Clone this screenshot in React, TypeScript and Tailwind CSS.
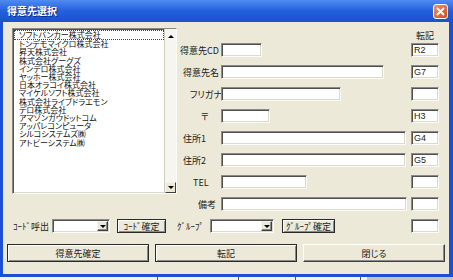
const customers = [
  "ソフトバンカー株式会社",
  "トンデモマイクロ株式会社",
  "昇天株式会社",
  "株式会社グーグズ",
  "インデロ株式会社",
  "ヤッホー株式会社",
  "日本オラコイ株式会社",
  "マイケルソフト株式会社",
  "株式会社ライブドラエモン",
  "デロ株式会社",
  "アマゾンガウドットコム",
  "アッパレコンピュータ",
  "シルコシステムズ㈱",
  "アトビーシステム㈱",
];

type Row = { label: string; pad: string; width: string; code: string };

const rows: Row[] = [
  { label: "得意先CD", pad: "pl-[3px]", width: "w-[41px]", code: "R2" },
  { label: "得意先名", pad: "pl-[6px]", width: "w-[163px]", code: "G7" },
  { label: "フリガナ", pad: "pl-[13px]", width: "w-[120px]", code: "" },
  { label: "〒", pad: "pl-[24px]", width: "w-[49px]", code: "H3" },
  { label: "住所1", pad: "pl-[6px]", width: "w-[185px]", code: "G4" },
  { label: "住所2", pad: "pl-[6px]", width: "w-[185px]", code: "G5" },
  { label: "TEL", pad: "pl-[16px]", width: "w-[86px]", code: "" },
  { label: "備考", pad: "pl-[21px]", width: "w-[186px]", code: "" },
];

const sunken =
  "bg-white border border-t-[#8a8a8a] border-l-[#8a8a8a] border-r-[#fbfbf8] border-b-[#fbfbf8] shadow-[inset_1px_1px_0_#505050,inset_-1px_-1px_0_#dcd9cd]";

function Field({ className, text }: { className: string; text?: string }) {
  return (
    <div className={`h-[14px] ${sunken} ${className} flex items-center pl-[2px] font-['Liberation_Sans',sans-serif] text-[9px] leading-none text-[#222]`}>
      {text}
    </div>
  );
}

function Combo({ className }: { className: string }) {
  return (
    <div className={`h-[14px] ${sunken} ${className} flex justify-end p-[1px]`}>
      <div className="flex w-[11px] items-center justify-center border border-t-[#f4f3ee] border-l-[#f4f3ee] border-r-[#404040] border-b-[#404040] bg-[#ece9d8] shadow-[inset_-1px_-1px_0_#8a8a8a]">
        <div className="h-0 w-0 border-x-[3px] border-t-[3px] border-x-transparent border-t-black" />
      </div>
    </div>
  );
}

function Button({ label, strong, className }: { label: string; strong?: boolean; className?: string }) {
  const frame = strong
    ? "border border-[#2a2a2a] shadow-[inset_1px_1px_0_#ffffff,inset_-1px_-1px_0_#8a8a8a]"
    : "border border-t-white border-l-white border-r-[#404040] border-b-[#404040] shadow-[inset_-1px_-1px_0_#8a8a8a]";
  return (
    <div className={`flex items-center justify-center bg-[#ece9d8] text-[9px] leading-none text-[#222] ${frame} ${className ?? ""}`}>
      {label}
    </div>
  );
}

export default function App() {
  return (
    <div className="h-[280px] w-[453px] overflow-hidden bg-[#dcdcdc] font-['Noto_Sans_CJK_JP',sans-serif] [font-feature-settings:'palt']">
      {/* title bar */}
      <div className="flex h-[22px] items-center justify-between bg-gradient-to-b from-[#4f8bf0] via-[#245fdc] to-[#1b52cc] pl-[7px] pr-[5px]">
        <span className="text-[10px] font-bold leading-none text-white [text-shadow:1px_1px_0_#0c2f8c]">得意先選択</span>
        <div className="flex h-[15px] w-[15px] items-center justify-center rounded-[3px] border border-white bg-gradient-to-br from-[#f0916c] to-[#d7441c]">
          <svg width="9" height="9" viewBox="0 0 9 9">
            <path d="M1.5 1.5 L7.5 7.5 M7.5 1.5 L1.5 7.5" stroke="white" strokeWidth="1.8" strokeLinecap="round" />
          </svg>
        </div>
      </div>

      {/* body */}
      <div className="h-[255px] border-x-[3px] border-r-[4px] border-b-[3px] border-[#1a4fd6] bg-[#ece9d8]">
        <div className="flex h-[189px]">
          {/* list box */}
          <div className="pl-[9px] pt-[6px]">
            <div className={`flex h-[166px] w-[165px] ${sunken}`}>
              <div className="flex-1 pl-[1px] pt-[1px] text-[8px] leading-[8.2px] text-[#111]">
                {customers.map((c, i) => (
                  <div key={c} className={i === 0 ? "border border-dotted border-[#444] pl-[4px]" : "pl-[5px]"}>
                    {c}
                  </div>
                ))}
              </div>
              <div className="flex w-[12px] flex-col justify-between border-l border-[#cfccc0] bg-[#f6f5f0]">
                <div className="mt-[2px] flex h-[10px] items-center justify-center">
                  <div className="h-0 w-0 border-x-[3px] border-b-[3px] border-x-transparent border-b-black" />
                </div>
                <div className="flex h-[11px] items-center justify-center border border-t-[#f4f3ee] border-l-[#f4f3ee] border-r-[#404040] border-b-[#404040] bg-[#ece9d8]">
                  <div className="h-0 w-0 border-x-[3px] border-t-[3px] border-x-transparent border-t-black" />
                </div>
              </div>
            </div>
          </div>

          {/* form */}
          <div className="flex flex-1 flex-col pr-[10px] text-[9px] leading-none text-[#222]">
            <div className="flex h-[21px] items-end justify-end pb-[3px]">
              <span className="w-[28px] text-center">転記</span>
            </div>
            <div className="flex flex-col gap-[8px]">
              {rows.map((r) => (
                <div key={r.label} className="flex h-[14px] items-center">
                  <span className={`w-[41px] ${r.pad} whitespace-nowrap`}>{r.label}</span>
                  <Field className={`ml-[3px] ${r.width}`} />
                  <div className="flex-1" />
                  <Field className="w-[28px]" text={r.code} />
                </div>
              ))}
            </div>
          </div>
        </div>

        {/* search row */}
        <div className="mt-[8px] flex h-[14px] items-center pl-[10px] pr-[10px] text-[9px] leading-none text-[#222]">
          <span className="w-[39px] whitespace-nowrap">ｺｰﾄﾞ呼出</span>
          <Combo className="w-[58px]" />
          <Button label="ｺｰﾄﾞ確定" strong className="ml-[7px] h-[14px] w-[49px]" />
          <span className="ml-[11px] w-[33px] whitespace-nowrap">ｸﾞﾙｰﾌﾟ</span>
          <Combo className="w-[64px]" />
          <Button label="ｸﾞﾙｰﾌﾟ確定" strong className="ml-[8px] h-[14px] w-[53px]" />
          <div className="flex-1" />
          <Field className="w-[28px]" />
        </div>

        {/* action buttons */}
        <div className="mt-[11px] grid h-[18px] grid-cols-3 gap-[6px] px-[4px]">
          <Button label="得意先確定" strong />
          <Button label="転記" strong />
          <Button label="閉じる" />
        </div>
      </div>

      {/* what lies behind the dialog */}
      <div className="flex h-[3px] bg-[#f3f3f3]">
        <div className="w-[157px]" />
        <div className="w-[81px] border-l border-[#555]" />
        <div className="w-[57px] border-l border-[#555]" />
        <div className="w-[65px] border-l border-[#555]" />
        <div className="w-[7px] border-l border-[#555]" />
        <div className="flex-1 bg-[#c4c4c4]" />
      </div>
    </div>
  );
}
